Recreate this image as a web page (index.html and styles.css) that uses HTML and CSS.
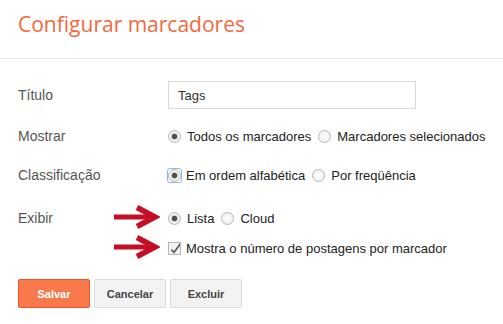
FILE: index.html
```html
<!DOCTYPE html>
<html>
<head>
	<title>Configurar marcadores</title>
	<meta http-equiv="Content-Type" content="text/html;charset=utf-8">
	<link rel="stylesheet" href="styles.css">
</head>
<body>
	<div class="dialog">
		<div class="head">
			<h1>Configurar marcadores</h1>
		</div>
		<form class="config">
			<div class="row r1">
				<div class="lbl">Título</div>
				<div class="field"><input class="txt" type="text" value="Tags"></div>
			</div>
			<div class="row r2">
				<div class="lbl">Mostrar</div>
				<div class="field">
					<label class="opt"><input type="radio" name="show" checked>Todos os marcadores</label>
					<label class="opt"><input type="radio" name="show">Marcadores selecionados</label>
				</div>
			</div>
			<div class="row r3">
				<div class="lbl">Classificação</div>
				<div class="field">
					<label class="opt"><span class="focus"><input type="radio" name="sort" checked></span>Em ordem alfabética</label>
					<label class="opt"><input type="radio" name="sort">Por freqüência</label>
				</div>
			</div>
			<div class="row r4">
				<div class="lbl">Exibir
					<svg class="arrow" width="46" height="24" viewBox="0 0 46 24"><path d="M0 12H41" stroke="#c50f27" stroke-width="5" fill="none"/><path d="M23 2.5L41 12L23 21.5" stroke="#c50f27" stroke-width="5.5" fill="none"/></svg>
				</div>
				<div class="field">
					<label class="opt"><input type="radio" name="view" checked>Lista</label>
					<label class="opt"><input type="radio" name="view">Cloud</label>
				</div>
			</div>
			<div class="row r5">
				<div class="lbl">
					<svg class="arrow" width="46" height="24" viewBox="0 0 46 24"><path d="M0 12H41" stroke="#c50f27" stroke-width="5" fill="none"/><path d="M23 2.5L41 12L23 21.5" stroke="#c50f27" stroke-width="5.5" fill="none"/></svg>
				</div>
				<div class="field">
					<label class="opt chk"><input type="checkbox" checked>Mostra o número de postagens por marcador</label>
				</div>
			</div>
			<div class="buttons">
				<button type="button" class="btn primary">Salvar</button>
				<button type="button" class="btn">Cancelar</button>
				<button type="button" class="btn">Excluir</button>
			</div>
		</form>
	</div>
</body>
</html>
```

FILE: styles.css
```css
body{margin:0;background:#fff;font-family:"Liberation Sans",Arial,sans-serif;}
.head{border-bottom:1px solid #e5e5e5;padding:10px 0 0 18px;box-sizing:border-box;height:59px}
.head h1{margin:0;font-family:"Open Sans",sans-serif;font-weight:400;font-size:21px;line-height:28px;color:#f4683c;}
.config{padding-left:18px;display:flex;flex-direction:column}
.row{display:flex;align-items:center;height:28px}
.r1{margin-top:22px}
.r2{margin-top:13px}
.r3{margin-top:11px}
.r4{margin-top:15px}
.r5{margin-top:2px}
.lbl{width:142px;padding-right:8px;display:flex;align-items:center;font-size:14px;color:#555}
.arrow{display:block;margin:-3px 0 0 auto}
.field{display:flex;align-items:center}
.txt{width:248px;height:28px;box-sizing:border-box;border:1px solid #d9d9d9;padding:0 9px;font-family:"Liberation Sans",Arial,sans-serif;font-size:13px;color:#333;outline:none}
.opt{display:flex;align-items:center;font-size:13px;color:#222;margin-right:7px}
.opt input{-webkit-appearance:none;appearance:none;margin:0 6px 0 0;width:13px;height:13px;box-sizing:border-box;border:1px solid #b8b8b8;background:radial-gradient(circle,#fdfdfd 0,#ececec 100%);border-radius:50%}
.opt input:checked{background:radial-gradient(circle,#4f4f4f 0,#4f4f4f 2.4px,#e9e9e9 3.2px,#fbfbfb 100%)}
.focus{display:flex;border:1.5px solid #8db5ee;border-radius:3px;margin:-1.5px 4.5px -1.5px -1.5px;padding:0}
.focus input{margin:0}
.opt input[type=checkbox]{border-radius:0;border-color:#b5b5b5;background:#f3f3f3 url("data:image/svg+xml,%3Csvg xmlns='http://www.w3.org/2000/svg' width='13' height='13'%3E%3Cpath d='M2.5 6.5L5 9.5L11.5 0.5' stroke='%23555' stroke-width='1.6' fill='none'/%3E%3C/svg%3E") no-repeat;margin-right:5px}
.buttons{display:flex;margin-top:17px}
.btn{width:72px;height:29px;margin-right:4px;box-sizing:border-box;border:1px solid #dcdcdc;border-radius:2px;background:#f3f3f3;color:#444;font-family:"Liberation Sans",Arial,sans-serif;font-size:11px;font-weight:bold;padding:0}
.btn.primary{background:#f87a4c;border-color:#f0552a;color:#fff}
```
